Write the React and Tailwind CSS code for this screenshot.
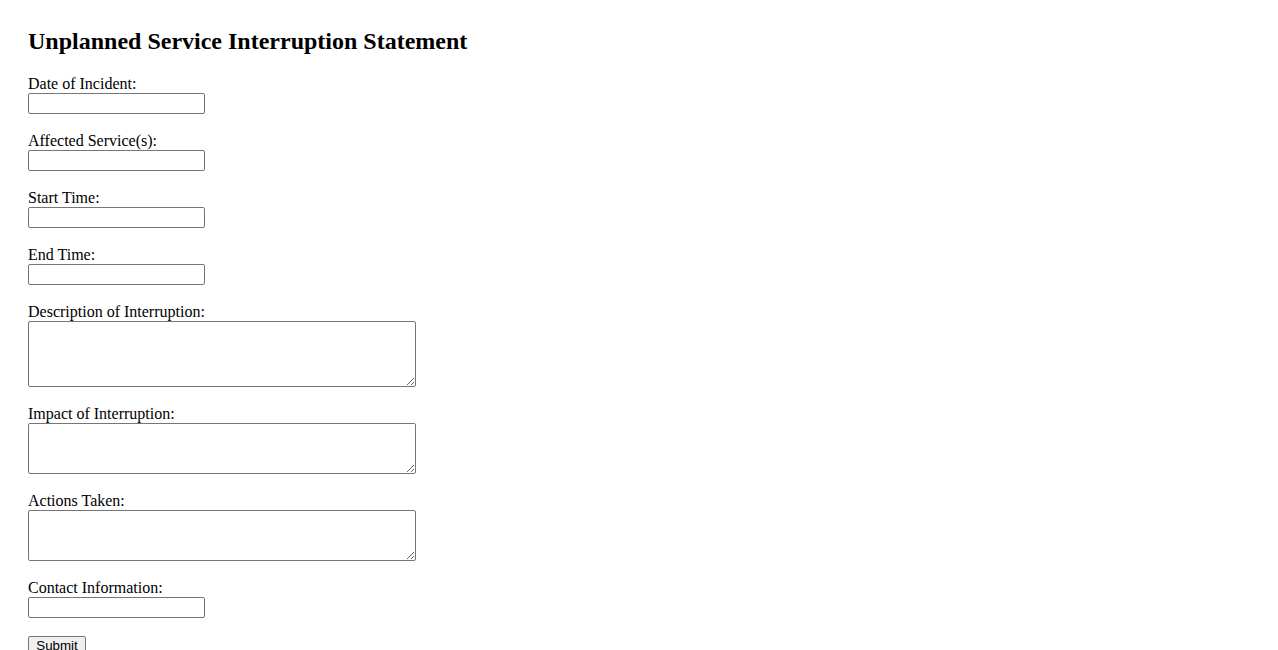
import React from "react";

function Field({ label, children }) {
  return (
    <div className="flex flex-col items-start mb-[19px]">
      <label className="block h-[17px] leading-[15px] text-[16px] whitespace-nowrap">{label}</label>
      {children}
    </div>
  );
}

function Input() {
  return (
    <input
      type="text"
      className="block w-[177px] h-[21px] border border-[#767676] rounded-[2px] bg-white px-[2px] text-[13px] outline-none"
    />
  );
}

function Area({ h }) {
  return (
    <textarea
      className={`block w-[388px] ${h} border border-[#767676] rounded-[2px] bg-white p-[2px] text-[13px] outline-none`}
    />
  );
}

export default function App() {
  return (
    <div
      className="bg-white text-black min-h-[650px] pt-[28px] px-[28px]"
      style={{ fontFamily: '"Liberation Serif", "Times New Roman", serif' }}
    >
      <h2 className="text-[24px] font-bold leading-[26px] h-[28px] mb-[20px] whitespace-nowrap">
        Unplanned Service Interruption Statement
      </h2>
      <form className="flex flex-col" onSubmit={(e) => e.preventDefault()}>
        <Field label="Date of Incident:"><Input /></Field>
        <Field label="Affected Service(s):"><Input /></Field>
        <Field label="Start Time:"><Input /></Field>
        <Field label="End Time:"><Input /></Field>
        <Field label="Description of Interruption:"><Area h="h-[66px]" /></Field>
        <Field label="Impact of Interruption:"><Area h="h-[51px]" /></Field>
        <Field label="Actions Taken:"><Area h="h-[51px]" /></Field>
        <div className="flex flex-col items-start mb-[18px]">
          <label className="block h-[17px] leading-[15px] text-[16px] whitespace-nowrap">Contact Information:</label>
          <Input />
        </div>
        <div>
          <button
            type="submit"
            className="flex items-start justify-center pt-[1px] h-[22px] w-[58px] border border-[#767676] rounded-[2px] bg-[#efefef] text-[13.33px] leading-[16px] text-black"
            style={{ fontFamily: '"Liberation Sans", Arial, sans-serif' }}
          >
            Submit
          </button>
        </div>
      </form>
    </div>
  );
}
